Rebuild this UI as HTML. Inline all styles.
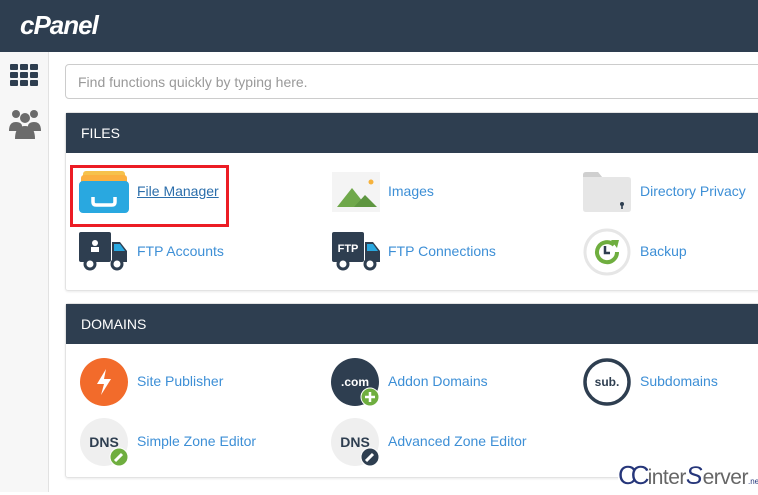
<!DOCTYPE html>
<html><head><meta charset="utf-8"><style>
*{margin:0;padding:0;box-sizing:border-box}
body{width:758px;height:492px;overflow:hidden;background:#fff;font-family:"Liberation Sans",sans-serif;position:relative}
.hdr{position:absolute;left:0;top:0;width:758px;height:52px;background:#2e3e50}
.logo{position:absolute;left:20px;top:10px;color:#fff;font-size:26px;font-weight:bold;font-style:italic;letter-spacing:-1px}
.side{position:absolute;left:0;top:52px;width:49px;height:440px;background:#f7f7f7;border-right:1px solid #e2e2e2}
.search{position:absolute;left:65px;top:64px;width:700px;height:35px;border:1px solid #ccc;border-radius:4px;color:#999;font-size:14px;padding:9px 12px}
.panel{position:absolute;left:65px;width:700px;border:1px solid #e3e3e3;border-radius:3px;box-shadow:0 1px 2px rgba(0,0,0,.08)}
.ph{height:40px;background:#2e3e50;color:#fff;font-size:14px;padding:12px 0 0 15px}
.it{position:absolute;color:#3d8fd6;font-size:14px}
.ic{position:absolute}
</style></head><body>
<div class="hdr"><div class="logo">cPanel</div></div>
<div class="side">
<svg style="position:absolute;left:10px;top:12px" width="29" height="22"><g fill="#2e3e50"><rect x="0" y="0" width="8" height="6" rx="1"/><rect x="10" y="0" width="8" height="6" rx="1"/><rect x="20" y="0" width="8" height="6" rx="1"/><rect x="0" y="8" width="8" height="6" rx="1"/><rect x="10" y="8" width="8" height="6" rx="1"/><rect x="20" y="8" width="8" height="6" rx="1"/><rect x="0" y="16" width="8" height="6" rx="1"/><rect x="10" y="16" width="8" height="6" rx="1"/><rect x="20" y="16" width="8" height="6" rx="1"/></g></svg>
<svg style="position:absolute;left:9px;top:57px" width="32" height="30"><g fill="#6b6b6b"><circle cx="7" cy="5" r="4"/><circle cx="25" cy="5" r="4"/><circle cx="16" cy="9" r="5"/><path d="M0 22c0-7 3-9 7-9s6 2 6 4v5z"/><path d="M32 22c0-7-3-9-7-9s-6 2-6 4v5z"/><path d="M6 30c0-10 4-13 10-13s10 3 10 13z"/></g></svg>
</div>
<div class="search">Find functions quickly by typing here.</div>

<div class="panel" style="top:112px;height:179px"><div class="ph">FILES</div></div>
<div class="panel" style="top:303px;height:175px"><div class="ph">DOMAINS</div></div>

<div style="position:absolute;left:70px;top:165px;width:159px;height:62px;border:3px solid #ec1c24"></div>
<svg class="ic" style="left:79px;top:171px" width="50" height="42"><rect x="4" y="0" width="42" height="14" rx="3" fill="#f6c24c"/><rect x="2" y="4" width="46" height="12" rx="3" fill="#fbb040"/><rect x="0" y="10" width="50" height="32" rx="4" fill="#29a8e0"/><path d="M14 26v5c0 2 1 3 3 3h16c2 0 3-1 3-3v-5" stroke="#fff" stroke-width="3.5" fill="none"/></svg>
<a class="it" style="left:137px;top:183px;color:#2b6eab;text-decoration:underline">File Manager</a>

<svg class="ic" style="left:332px;top:172px" width="48" height="40"><rect width="48" height="40" fill="#f4f4f4"/><path d="M5 35 20 16 35 35z" fill="#6fa84a"/><path d="M22 35 33 23 45 35z" fill="#5e9640"/><circle cx="39" cy="10" r="2.5" fill="#f6b23c"/></svg>
<span class="it" style="left:388px;top:183px">Images</span>

<svg class="ic" style="left:583px;top:172px" width="48" height="40"><path d="M0 3q0-3 3-3h12l4 5h26q3 0 3 3v29q0 3-3 3H3q-3 0-3-3z" fill="#e6e6e6"/><path d="M0 3q0-3 3-3h12l4 5H0z" fill="#cfcfcf"/><circle cx="39" cy="32" r="2" fill="#2e3e50"/><rect x="38.2" y="32" width="1.6" height="5" fill="#2e3e50"/></svg>
<span class="it" style="left:640px;top:183px">Directory Privacy</span>

<svg class="ic" style="left:79px;top:232px" width="50" height="40"><rect x="0" y="0" width="32" height="30" rx="2" fill="#2e3e50"/><path d="M33 10h8l7 9v11H33z" fill="#2e3e50"/><path d="M35 12h6l5 7H35z" fill="#29a8e0"/><circle cx="11" cy="32" r="5" fill="#fff" stroke="#2e3e50" stroke-width="3"/><circle cx="38" cy="32" r="5" fill="#fff" stroke="#2e3e50" stroke-width="3"/><circle cx="16" cy="11" r="3" fill="#fff"/><rect x="12" y="15" width="8" height="5" fill="#fff"/></svg>
<span class="it" style="left:137px;top:243px">FTP Accounts</span>

<svg class="ic" style="left:332px;top:232px" width="50" height="40"><rect x="0" y="0" width="32" height="30" rx="2" fill="#2e3e50"/><path d="M33 10h8l7 9v11H33z" fill="#2e3e50"/><path d="M35 12h6l5 7H35z" fill="#29a8e0"/><circle cx="11" cy="32" r="5" fill="#fff" stroke="#2e3e50" stroke-width="3"/><circle cx="38" cy="32" r="5" fill="#fff" stroke="#2e3e50" stroke-width="3"/><text x="16" y="20" fill="#fff" font-size="11" font-weight="bold" text-anchor="middle" font-family="Liberation Sans">FTP</text></svg>
<span class="it" style="left:388px;top:243px">FTP Connections</span>

<svg class="ic" style="left:583px;top:228px" width="48" height="48"><circle cx="24" cy="24" r="22" fill="#fff" stroke="#e6e6e6" stroke-width="3"/><path d="M31 17A10 10 0 1 0 34 24" stroke="#6fae3f" stroke-width="4" fill="none"/><path d="M28 12l8 0-2 8z" fill="#6fae3f"/><path d="M22 18v7h5" stroke="#2e3e50" stroke-width="2.5" fill="none"/></svg>
<span class="it" style="left:640px;top:243px">Backup</span>

<svg class="ic" style="left:80px;top:358px" width="48" height="48"><circle cx="24" cy="24" r="24" fill="#f26b2b"/><path d="M26 11 17 26h7l-3 11 10-16h-7z" fill="#fff"/></svg>
<span class="it" style="left:137px;top:373px">Site Publisher</span>

<svg class="ic" style="left:331px;top:358px" width="50" height="50"><circle cx="24" cy="24" r="24" fill="#2e3e50"/><text x="24" y="28" fill="#fff" font-size="12" font-weight="bold" text-anchor="middle" font-family="Liberation Sans">.com</text><circle cx="39" cy="39" r="9" fill="#6fae3f" stroke="#fff" stroke-width="1"/><path d="M39 34v10M34 39h10" stroke="#fff" stroke-width="2.5"/></svg>
<span class="it" style="left:388px;top:373px">Addon Domains</span>

<svg class="ic" style="left:583px;top:358px" width="48" height="48"><circle cx="24" cy="24" r="22" fill="#fff" stroke="#2e3e50" stroke-width="3.5"/><text x="24" y="28" fill="#2e3e50" font-size="12" font-weight="bold" text-anchor="middle" font-family="Liberation Sans">sub.</text></svg>
<span class="it" style="left:640px;top:373px">Subdomains</span>

<svg class="ic" style="left:80px;top:418px" width="50" height="50"><circle cx="24" cy="24" r="24" fill="#efefef"/><text x="24" y="29" fill="#2e3e50" font-size="14" font-weight="bold" text-anchor="middle" font-family="Liberation Sans">DNS</text><circle cx="39" cy="39" r="9" fill="#6fae3f" stroke="#fff" stroke-width="1"/><path d="M35 43l7-7" stroke="#fff" stroke-width="3"/></svg>
<span class="it" style="left:137px;top:433px">Simple Zone Editor</span>

<svg class="ic" style="left:331px;top:418px" width="50" height="50"><circle cx="24" cy="24" r="24" fill="#efefef"/><text x="24" y="29" fill="#2e3e50" font-size="14" font-weight="bold" text-anchor="middle" font-family="Liberation Sans">DNS</text><circle cx="39" cy="39" r="9" fill="#2e3e50" stroke="#fff" stroke-width="1"/><path d="M35 43l7-7" stroke="#fff" stroke-width="3"/></svg>
<span class="it" style="left:388px;top:433px">Advanced Zone Editor</span>

<div style="position:absolute;left:618px;top:462px;width:140px;height:28px;background:#fff;white-space:nowrap;line-height:26px;font-family:'Liberation Sans',sans-serif">
<span style="font-size:26px;color:#26367a;letter-spacing:-6px">CC</span><span style="font-size:21px;color:#666;letter-spacing:-0.5px;margin-left:4px">inter</span><span style="font-size:25px;color:#26367a;font-style:italic">S</span><span style="font-size:21px;color:#666;letter-spacing:-0.5px">erver</span><span style="font-size:8px;color:#26367a">.net</span></div>
</body></html>
